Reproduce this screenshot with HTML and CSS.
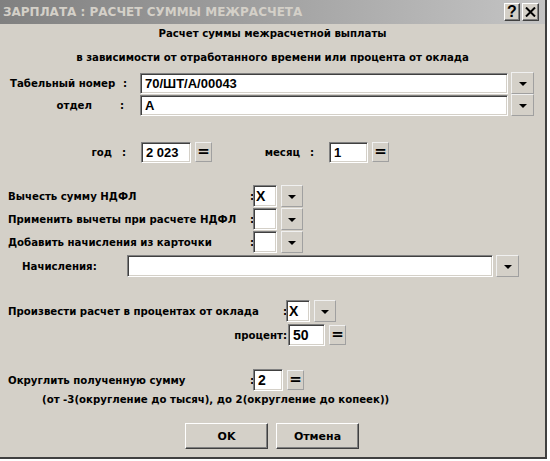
FILE: index.html
```html
<!DOCTYPE html>
<html>
<head>
<meta charset="utf-8">
<link rel="stylesheet" href="styles.css">
</head>
<body>
<div class="window">
  <div class="titlebar">
    <span class="title">ЗАРПЛАТА : РАСЧЕТ СУММЫ МЕЖРАСЧЕТА</span>
    <div class="tbtns">
      <span class="tbtn">?</span>
      <span class="tbtn x">
        <svg width="11" height="10" viewBox="0 0 11 10"><path d="M1 0.5 L10 9.5 M10 0.5 L1 9.5" stroke="#000" stroke-width="2"/></svg>
      </span>
    </div>
  </div>
  <div class="content">
    <div class="head h1">Расчет суммы межрасчетной выплаты</div>
    <div class="head h2">в зависимости от отработанного времени или процента от оклада</div>

    <div class="row r-tab">
      <span class="lt t-tab">Табельный номер</span><span class="c c-tab">:</span>
      <span class="field f-long">70/ШТ/А/00043</span>
      <span class="dd"><i></i></span>
    </div>
    <div class="row r-otd">
      <span class="lt t-otd">отдел</span><span class="c c-otd">:</span>
      <span class="field f-long">А</span>
      <span class="dd"><i></i></span>
    </div>

    <div class="row r-god">
      <span class="lt t-god">год</span><span class="c c-god">:</span>
      <span class="field f-god">2 023</span>
      <span class="eq">=</span>
      <span class="lt t-mes">месяц</span><span class="c c-mes">:</span>
      <span class="field f-mes">1</span>
      <span class="eq">=</span>
    </div>

    <div class="row r-chk1">
      <span class="lt t-chk">Вычесть сумму НДФЛ</span><span class="c c-chk">:</span>
      <span class="field f-chk">X</span>
      <span class="dd dd-s"><i></i></span>
    </div>
    <div class="row r-chk">
      <span class="lt t-chk">Применить вычеты при расчете НДФЛ</span><span class="c c-chk">:</span>
      <span class="field f-chk"></span>
      <span class="dd dd-s"><i></i></span>
    </div>
    <div class="row r-chk">
      <span class="lt t-chk">Добавить начисления из карточки</span><span class="c c-chk">:</span>
      <span class="field f-chk"></span>
      <span class="dd dd-s"><i></i></span>
    </div>
    <div class="row r-nach">
      <span class="lt t-nach">Начисления:</span>
      <span class="field f-nach"></span>
      <span class="dd"><i></i></span>
    </div>

    <div class="row r-pr">
      <span class="lt t-pr">Произвести расчет в процентах от оклада</span><span class="c c-chk">:</span>
      <span class="field f-chk">X</span>
      <span class="dd dd-s"><i></i></span>
    </div>
    <div class="row r-proc">
      <span class="lt t-proc">процент:</span>
      <span class="field f-proc">50</span>
      <span class="eq">=</span>
    </div>

    <div class="row r-okr">
      <span class="lt t-chk">Округлить полученную сумму</span><span class="c c-chk">:</span>
      <span class="field f-okr">2</span>
      <span class="eq">=</span>
    </div>
    <div class="note">(от -3(округление до тысяч), до 2(округление до копеек))</div>

    <div class="buttons">
      <span class="btn">OK</span>
      <span class="btn">Отмена</span>
    </div>
  </div>
</div>
</body>
</html>
```

FILE: styles.css
```css
html, body {
  margin: 0;
  padding: 0;
  background: #ffffff;
}
body {
  font-family: "DejaVu Sans", Verdana, sans-serif;
  font-size: 10.2px;
  font-weight: bold;
  color: #000;
}
.window {
  width: 545px;
  height: 457px;
  background: #d4d0c8;
  border-right: 2px solid #404040;
  border-bottom: 2px solid #404040;
  position: relative;
  overflow: hidden;
}
.titlebar {
  height: 24px;
  background: linear-gradient(to right, #808080, #c4c4c4);
  display: flex;
  align-items: center;
  justify-content: space-between;
}
.title {
  color: #d4d0c8;
  font-size: 12px;
  padding-left: 3px;
}
.tbtns {
  display: flex;
  gap: 2px;
  padding-right: 6px;
}
.tbtn {
  box-sizing: border-box;
  width: 16px;
  height: 18px;
  background: #d4d0c8;
  border-top: 1px solid #fff;
  border-left: 1px solid #fff;
  border-right: 1px solid #404040;
  border-bottom: 1px solid #404040;
  box-shadow: inset -1px -1px #808080;
  display: flex;
  align-items: center;
  justify-content: center;
  font-family: "Liberation Sans", Arial, sans-serif;
  font-size: 16px;
  line-height: 16px;
}
.tbtn.x { width: 17px; }
.content {
  position: relative;
}
.head {
  text-align: center;
  height: 14px;
  line-height: 14px;
}
.h1 { margin-top: 3px; }
.h2 { margin-top: 10px; }
.row {
  display: flex;
  align-items: center;
}
.lt, .c {
  white-space: nowrap;
  box-sizing: border-box;
}
.field {
  background: #fff;
  border-top: 1px solid #808080;
  border-left: 1px solid #808080;
  border-bottom: 1px solid #fff;
  border-right: 1px solid #fff;
  box-shadow: inset 1px 1px #404040, inset -1px -1px #d4d0c8;
  box-sizing: border-box;
  padding-left: 4px;
  font-family: "Liberation Sans", Arial, sans-serif;
  font-size: 13px;
  display: flex;
  align-items: center;
}
.dd {
  box-sizing: border-box;
  width: 23px;
  height: 22px;
  background: #d4d0c8;
  border-top: 1px solid #f0f0f0;
  border-left: 1px solid #f0f0f0;
  border-right: 1px solid #a0a0a0;
  border-bottom: 1px solid #a0a0a0;
  display: flex;
  align-items: center;
  justify-content: center;
  margin-left: 3px;
}
.dd i {
  width: 0;
  height: 0;
  border-left: 4px solid transparent;
  border-right: 4px solid transparent;
  border-top: 4px solid #000;
  margin-top: 1px;
}
.eq {
  box-sizing: border-box;
  width: 17px;
  height: 20px;
  background: #d4d0c8;
  border-top: 1px solid #f0f0f0;
  border-left: 1px solid #f0f0f0;
  border-right: 1px solid #a0a0a0;
  border-bottom: 1px solid #a0a0a0;
  display: flex;
  align-items: center;
  justify-content: center;
  margin-left: 4px;
  font-family: "DejaVu Sans", sans-serif;
  font-size: 15px;
  line-height: 15px;
  padding-bottom: 1px;
}

/* Табельный номер / отдел */
.r-tab { margin-top: 7px; height: 22px; padding-left: 10px; }
.t-tab { width: 98px; }
.c-tab { width: 32px; padding-left: 15px; }
.f-long { width: 368px; height: 21px; }
.r-otd { height: 22px; padding-left: 10px; }
.t-otd { width: 82px; text-align: right; }
.c-otd { width: 48px; padding-left: 28px; }

/* год / месяц */
.r-god { margin-top: 25px; height: 22px; padding-left: 60px; }
.t-god { width: 52px; text-align: right; }
.c-god { width: 29px; padding-left: 10px; }
.f-god { width: 50px; height: 21px; }
.t-mes { width: 88px; text-align: right; }
.c-mes { width: 29px; padding-left: 10px; }
.f-mes { width: 39px; height: 21px; }

/* checkbox rows */
.r-chk1 { margin-top: 22px; height: 22px; padding-left: 8px; }
.r-chk { margin-top: 1px; height: 22px; padding-left: 8px; }
.t-chk { width: 242px; }
.c-chk { width: 3px; }
.f-chk { width: 24px; height: 22px; font-size: 14px; padding-left: 2px; }
.dd-s { width: 22px; margin-left: 4px; }

.r-nach { margin-top: 2px; height: 22px; padding-left: 22px; }
.t-nach { width: 105px; }
.f-nach { width: 366px; height: 22px; }

.r-pr { margin-top: 23px; height: 22px; padding-left: 8px; }
.t-pr { width: 275px; }
.r-proc { margin-top: 2px; height: 22px; padding-left: 200px; }
.t-proc { width: 88px; text-align: right; padding-right: 1px; }
.f-proc { width: 37px; height: 22px; font-size: 14px; }

.r-okr { margin-top: 23px; height: 22px; padding-left: 8px; }
.f-okr { width: 30px; height: 22px; font-size: 14px; }

.note {
  margin-top: 1px;
  padding-left: 42px;
  height: 16px;
  line-height: 16px;
}
.buttons {
  margin-top: 15px;
  display: flex;
  gap: 8px;
  padding-left: 185px;
}
.btn {
  box-sizing: border-box;
  width: 83px;
  height: 26px;
  background: #d4d0c8;
  border-top: 1px solid #fff;
  border-left: 1px solid #fff;
  border-right: 1px solid #404040;
  border-bottom: 1px solid #404040;
  box-shadow: inset -1px -1px #808080;
  display: flex;
  align-items: center;
  justify-content: center;
  font-size: 11px;
}
```
